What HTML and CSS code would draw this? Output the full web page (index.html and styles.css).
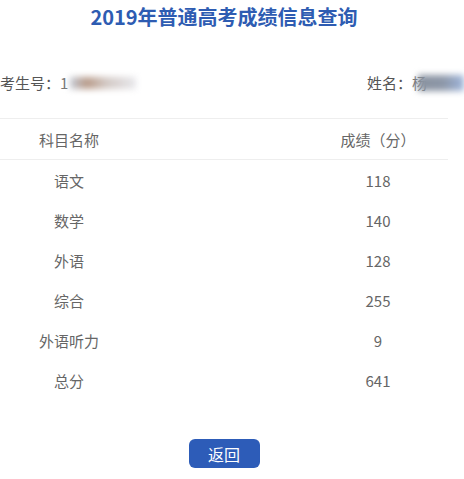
FILE: index.html
```html
<!DOCTYPE html>
<html lang="zh-CN">
<head>
<meta charset="utf-8">
<title>2019年普通高考成绩信息查询</title>
<link rel="stylesheet" href="styles.css">
</head>
<body>
<div class="page">
  <h1 class="title">2019年普通高考成绩信息查询</h1>
  <div class="info">
    <div class="info-item">考生号：<span class="id">1</span><span class="blur blur-id"></span></div>
    <div class="info-item name">姓名：<span class="nm">杨</span><span class="blur blur-name"></span></div>
  </div>
  <div class="table">
    <div class="row head"><span class="c1">科目名称</span><span class="c3">成绩（分）</span></div>
    <div class="row"><span class="c1">语文</span><span class="c3">118</span></div>
    <div class="row"><span class="c1">数学</span><span class="c3">140</span></div>
    <div class="row"><span class="c1">外语</span><span class="c3">128</span></div>
    <div class="row"><span class="c1">综合</span><span class="c3">255</span></div>
    <div class="row"><span class="c1">外语听力</span><span class="c3">9</span></div>
    <div class="row"><span class="c1">总分</span><span class="c3">641</span></div>
  </div>
  <div class="actions"><button class="btn">返回</button></div>
</div>
</body>
</html>
```
FILE: styles.css
```css
html, body {
  margin: 0;
  padding: 0;
  background: #fff;
  overflow: hidden;
}
body {
  font-family: "Noto Sans CJK SC", "Noto Sans", sans-serif;
  color: #666;
}
.page {
  width: 448px;
}
.title {
  margin: 0;
  padding-top: 3px;
  height: 32px;
  line-height: 28px;
  font-size: 20px;
  font-weight: bold;
  color: #2e5cb2;
  text-align: center;
}
.info {
  display: flex;
  justify-content: space-between;
  align-items: center;
  height: 84px;
  padding-top: 12px;
  font-size: 15px;
  color: #555;
  border-bottom: 1px solid #eee;
  box-sizing: border-box;
  width: 448px;
}
.info-item {
  display: flex;
  align-items: center;
  white-space: nowrap;
}
.info-item.name {
  margin-right: -16px;
}
.id, .nm {
  color: #777;
}
.blur {
  display: inline-block;
  height: 12px;
  filter: blur(3px);
}
.blur-id {
  width: 66px;
  margin-left: 2px;
  background: linear-gradient(90deg, #c4ccd8 0%, #b89a88 25%, #d2c8c4 55%, #e8e8ec 100%);
}
.blur-name {
  width: 46px;
  height: 16px;
  margin-left: -9px;
  background: linear-gradient(90deg, #8a93a0 0%, #8d97a8 55%, #9fb6dc 100%);
}
.table {
  font-size: 15px;
  color: #666;
}
.row {
  display: grid;
  grid-template-columns: 138px 1fr 140px;
  height: 40px;
  align-items: center;
  text-align: center;
}
.row .c1 { grid-column: 1; }
.row .c3 { grid-column: 3; }
.row.head {
  border-bottom: 1px solid #eee;
  color: #666;
}
.actions {
  display: flex;
  justify-content: center;
  padding-top: 39px;
}
.btn {
  width: 71px;
  height: 29px;
  border: none;
  border-radius: 6px;
  background: #2d5cb8;
  color: #fff;
  font-family: "Noto Sans CJK SC", sans-serif;
  font-size: 16px;
  padding: 0;
}
```
